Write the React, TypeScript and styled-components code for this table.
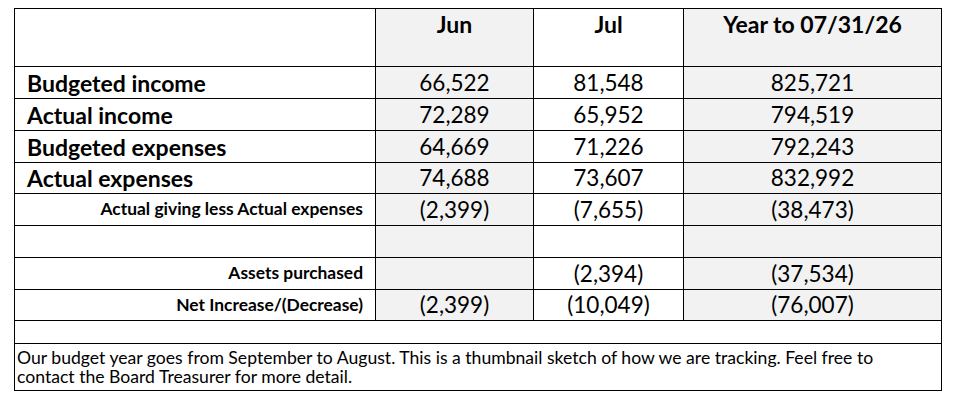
import styled, { createGlobalStyle } from "styled-components";

const GlobalStyle = createGlobalStyle`
    body {
        margin: 0;
        background: #fff;
        font-family: Lato, "Liberation Sans", sans-serif;
        color: #000;
    }
`;

const Sheet = styled.div`
    display: grid;
    grid-template-columns: 360px 157px 149px 257px;
    grid-template-rows: 57px 31px 31px 31px 30px 31px 31px 31px 30px 22px 46px;
    gap: 1px;
    padding: 1px;
    width: 926px;
    margin: 8px 0 0 14px;
    background: #000;
`;

const Cell = styled.div<{ $shaded?: boolean }>`
    display: flex;
    min-width: 0;
    white-space: nowrap;
    background: ${(p) => (p.$shaded ? "#f2f2f2" : "#fff")};
`;

const HeadCell = styled(Cell)`
    justify-content: center;
    align-items: flex-start;
    padding-top: 1px;
    font-size: 23px;
    font-weight: 700;
`;

const LabelCell = styled(Cell)`
    align-items: flex-end;
    padding: 0 0 1px 12px;
    font-size: 23px;
    font-weight: 700;
`;

const SubLabelCell = styled(Cell)`
    justify-content: flex-end;
    align-items: center;
    padding: 0 12px 2px 0;
    font-size: 17.4px;
    font-weight: 700;
`;

const NumCell = styled(Cell)`
    justify-content: center;
    align-items: flex-end;
    padding-bottom: 2px;
    font-size: 22.5px;
`;

const WideCell = styled(Cell)`
    grid-column: 1 / -1;
`;

const NoteCell = styled(WideCell)`
    display: block;
    padding: 4px 2px 0;
    font-size: 17.6px;
    line-height: 19px;
`;

type Row = {
    label?: string;
    sub?: boolean;
    values: string[];
};

const rows: Row[] = [
    { label: "Budgeted income", values: ["66,522", "81,548", "825,721"] },
    { label: "Actual income", values: ["72,289", "65,952", "794,519"] },
    { label: "Budgeted expenses", values: ["64,669", "71,226", "792,243"] },
    { label: "Actual expenses", values: ["74,688", "73,607", "832,992"] },
    { label: "Actual giving less Actual expenses", sub: true, values: ["(2,399)", "(7,655)", "(38,473)"] },
    { sub: true, values: ["", "", ""] },
    { label: "Assets purchased", sub: true, values: ["", "(2,394)", "(37,534)"] },
    { label: "Net Increase/(Decrease)", sub: true, values: ["(2,399)", "(10,049)", "(76,007)"] },
];

// Jun and the year column carry the grey fill, Jul stays white
const shaded = [true, false, true];
const heads = ["Jun", "Jul", "Year to 07/31/26"];

export default function App() {
    return (
        <>
            <GlobalStyle />
            <Sheet>
                <HeadCell />
                {heads.map((h, i) => (
                    <HeadCell key={h} $shaded={shaded[i]}>{h}</HeadCell>
                ))}

                {rows.map((r, ri) => [
                    r.sub
                        ? <SubLabelCell key={`l${ri}`}>{r.label}</SubLabelCell>
                        : <LabelCell key={`l${ri}`}>{r.label}</LabelCell>,
                    ...r.values.map((v, i) => (
                        <NumCell key={`v${ri}-${i}`} $shaded={shaded[i]}>{v}</NumCell>
                    )),
                ])}

                <WideCell />
                <NoteCell>
                    Our budget year goes from September to August. This is a thumbnail sketch of how we are tracking. Feel free to
                    <br />
                    contact the Board Treasurer for more detail.
                </NoteCell>
            </Sheet>
        </>
    );
}
